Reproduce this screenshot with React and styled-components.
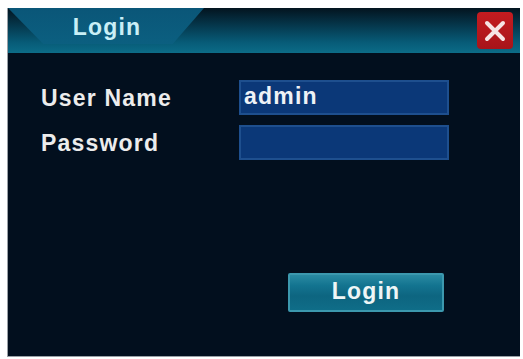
import styled, { createGlobalStyle } from "styled-components";

const GlobalStyle = createGlobalStyle`
  html, body {
    margin: 0;
    padding: 0;
    background: #ffffff;
  }
  body {
    font-family: "Liberation Sans", Arial, sans-serif;
  }
`;

const Page = styled.div`
  width: 523px;
  height: 359px;
  padding: 8px 3px 2px 7px;
  box-sizing: border-box;
  display: flex;
`;

const Panel = styled.div`
  flex: 1;
  display: flex;
  flex-direction: column;
  background: #020f1e;
  border-left: 1px solid #9aa0a6;
  border-bottom: 1px solid #9aa0a6;
  overflow: hidden;
`;

const Header = styled.div`
  height: 45px;
  display: flex;
  align-items: flex-start;
  justify-content: space-between;
  background: linear-gradient(
    to bottom,
    #03141f 0%,
    #053448 35%,
    #075a76 75%,
    #0a6682 92%,
    #0d6d88 100%
  );
`;

const Tab = styled.div`
  width: 196px;
  height: 36px;
  display: flex;
  align-items: center;
  justify-content: center;
  padding: 2px 0 0 2px;
  box-sizing: border-box;
  background: linear-gradient(to bottom, #0a5678, #0b5f80);
  clip-path: polygon(0 0, 100% 0, 84% 100%, 18% 100%);
  color: #c9eff6;
  font-size: 23px;
  font-weight: bold;
  letter-spacing: 1.2px;
`;

const Close = styled.button`
  width: 36px;
  height: 37px;
  margin: 4px 7px 0 0;
  padding: 0;
  border: none;
  border-radius: 4px;
  background: linear-gradient(to bottom, #c41c20, #a8141a);
  display: flex;
  align-items: center;
  justify-content: center;
  cursor: pointer;
`;

const Body = styled.div`
  flex: 1;
  display: flex;
  flex-direction: column;
  padding: 27px 0 44px 33px;
`;

const Form = styled.div`
  display: grid;
  grid-template-columns: 198px 210px;
  row-gap: 10px;
`;

const Label = styled.div`
  height: 35px;
  display: flex;
  align-items: center;
  padding-top: 2px;
  box-sizing: border-box;
  color: #ececec;
  font-size: 23px;
  font-weight: bold;
  letter-spacing: 1.2px;
`;

const Field = styled.div`
  height: 35px;
  box-sizing: border-box;
  background: #0b3878;
  border: 2px solid #1e4f8e;
  padding: 0 3px 3px;
  display: flex;
  align-items: center;
  color: #eef2f6;
  font-size: 23px;
  font-weight: bold;
  letter-spacing: 1.2px;
  line-height: 1;
`;

const Footer = styled.div`
  margin-top: auto;
  padding-left: 247px;
  display: flex;
`;

const LoginButton = styled.button`
  width: 156px;
  height: 39px;
  border: 2px solid #3c98ae;
  border-radius: 2px;
  background: linear-gradient(
    to bottom,
    #2a8aa2 0%,
    #137490 30%,
    #0d6580 60%,
    #0f6d88 100%
  );
  color: #eef6f6;
  font-family: "Liberation Sans", Arial, sans-serif;
  font-size: 23px;
  font-weight: bold;
  letter-spacing: 1.2px;
  padding: 0 0 2px;
  cursor: pointer;
`;

export default function App() {
  return (
    <>
      <GlobalStyle />
      <Page>
        <Panel>
          <Header>
            <Tab>Login</Tab>
            <Close aria-label="close">
              <svg width="24" height="24" viewBox="0 0 24 24">
                <path
                  d="M4 4 L20 20 M20 4 L4 20"
                  stroke="#f6e4e4"
                  strokeWidth="4"
                  strokeLinecap="round"
                />
              </svg>
            </Close>
          </Header>
          <Body>
            <Form>
              <Label>User Name</Label>
              <Field>admin</Field>
              <Label>Password</Label>
              <Field />
            </Form>
            <Footer>
              <LoginButton>Login</LoginButton>
            </Footer>
          </Body>
        </Panel>
      </Page>
    </>
  );
}
